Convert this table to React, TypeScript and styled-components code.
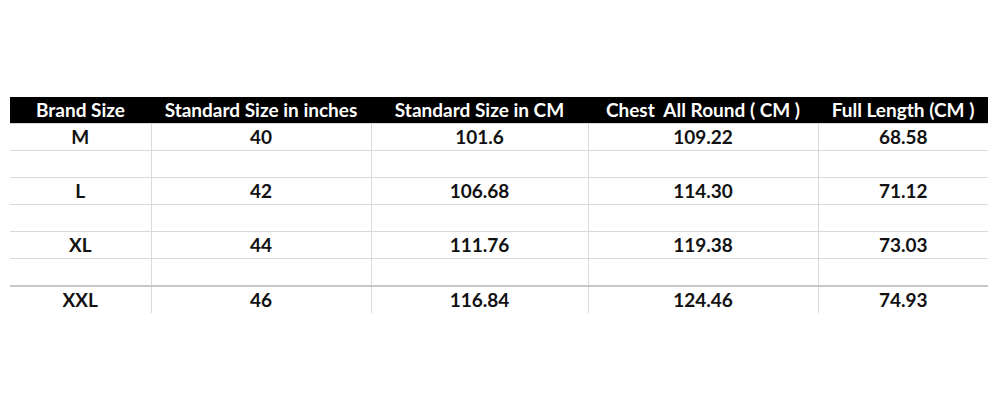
import React from "react";
import styled, { createGlobalStyle } from "styled-components";

const GlobalStyle = createGlobalStyle`
  html, body {
    margin: 0;
    padding: 0;
    background: #ffffff;
  }
  body {
    font-family: Lato, "Open Sans", "Liberation Sans", sans-serif;
  }
`;

const Page = styled.div`
  width: 1000px;
  height: 400px;
  padding: 97px 12px 0 10px;
  box-sizing: border-box;
`;

const Table = styled.table`
  width: 978px;
  border-collapse: collapse;
  table-layout: fixed;
`;

const HeadCell = styled.th<{ $width: number }>`
  width: ${(p) => p.$width}px;
  height: 26px;
  padding: 0;
  background: #000000;
  color: #ffffff;
  font-size: 19px;
  line-height: 26px;
  font-weight: 700;
  text-align: center;
  white-space: pre;
`;

const Row = styled.tr<{ $thick?: boolean }>`
  height: 27px;
  border-top: ${(p) => (p.$thick ? "2px solid #c8c8c8" : "1px solid #d9d9d9")};
`;

const Cell = styled.td`
  padding: 0;
  font-size: 19px;
  line-height: 26px;
  font-weight: 700;
  color: #111111;
  text-align: center;
  border-left: 1px solid #d9d9d9;

  &:first-child {
    border-left: none;
  }
`;

const columns = [
  { title: "Brand Size", width: 141 },
  { title: "Standard Size in inches", width: 220 },
  { title: "Standard Size in CM", width: 217 },
  { title: "Chest  All Round ( CM )", width: 230 },
  { title: "Full Length (CM )", width: 170 },
];

const sizes = [
  ["M", "40", "101.6", "109.22", "68.58"],
  ["L", "42", "106.68", "114.30", "71.12"],
  ["XL", "44", "111.76", "119.38", "73.03"],
  ["XXL", "46", "116.84", "124.46", "74.93"],
];

function App() {
  return (
    <Page>
      <GlobalStyle />
      <Table>
        <thead>
          <tr>
            {columns.map((col) => (
              <HeadCell key={col.title} $width={col.width}>
                {col.title}
              </HeadCell>
            ))}
          </tr>
        </thead>
        <tbody>
          {sizes.map((row, i) => (
            <React.Fragment key={row[0]}>
              <Row $thick={i === sizes.length - 1}>
                {row.map((val, j) => (
                  <Cell key={j}>{val}</Cell>
                ))}
              </Row>
              {i < sizes.length - 1 && (
                <Row>
                  {row.map((_, j) => (
                    <Cell key={j} />
                  ))}
                </Row>
              )}
            </React.Fragment>
          ))}
        </tbody>
      </Table>
    </Page>
  );
}

export default App;
